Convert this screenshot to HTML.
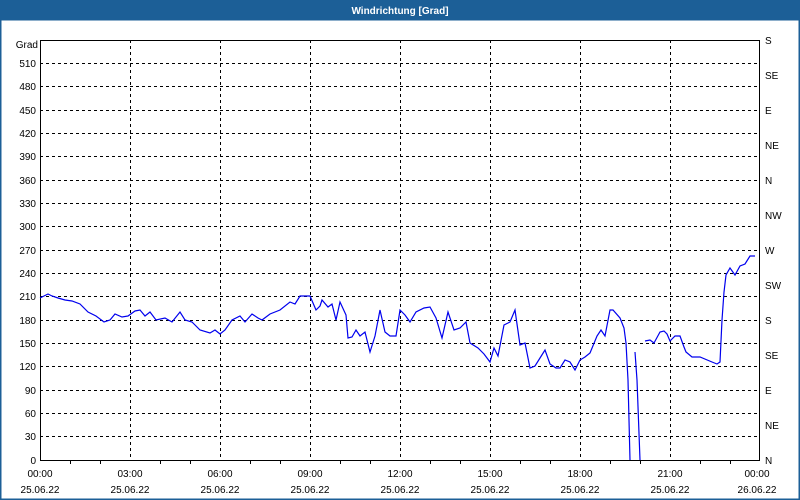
<!DOCTYPE html>
<html><head><meta charset="utf-8"><style>
html,body{margin:0;padding:0;width:800px;height:500px;overflow:hidden;background:#fff;font-family:"Liberation Sans",sans-serif}
</style></head><body>
<svg width="800" height="500" xmlns="http://www.w3.org/2000/svg" font-family="Liberation Sans, sans-serif" font-size="10">
<rect x="0" y="0" width="800" height="500" fill="#fff"/>
<rect x="0" y="0" width="800" height="20" fill="#1c5f97"/>
<rect x="0.5" y="19.5" width="799" height="480" fill="none" stroke="#1c5f97" stroke-width="2"/>
<text x="400" y="14" fill="#fff" font-weight="bold" text-anchor="middle">Windrichtung [Grad]</text>
<g stroke="#000" stroke-dasharray="3,3" stroke-width="1">
<line x1="40" y1="63.5" x2="760" y2="63.5"/><line x1="40" y1="86.5" x2="760" y2="86.5"/>
<line x1="40" y1="110.5" x2="760" y2="110.5"/><line x1="40" y1="133.5" x2="760" y2="133.5"/>
<line x1="40" y1="156.5" x2="760" y2="156.5"/><line x1="40" y1="180.5" x2="760" y2="180.5"/>
<line x1="40" y1="203.5" x2="760" y2="203.5"/><line x1="40" y1="226.5" x2="760" y2="226.5"/>
<line x1="40" y1="250.5" x2="760" y2="250.5"/><line x1="40" y1="273.5" x2="760" y2="273.5"/>
<line x1="40" y1="296.5" x2="760" y2="296.5"/><line x1="40" y1="320.5" x2="760" y2="320.5"/>
<line x1="40" y1="343.5" x2="760" y2="343.5"/><line x1="40" y1="366.5" x2="760" y2="366.5"/>
<line x1="40" y1="390.5" x2="760" y2="390.5"/><line x1="40" y1="413.5" x2="760" y2="413.5"/>
<line x1="40" y1="436.5" x2="760" y2="436.5"/>
<line x1="130.5" y1="40" x2="130.5" y2="460"/><line x1="220.5" y1="40" x2="220.5" y2="460"/>
<line x1="310.5" y1="40" x2="310.5" y2="460"/><line x1="400.5" y1="40" x2="400.5" y2="460"/>
<line x1="490.5" y1="40" x2="490.5" y2="460"/><line x1="580.5" y1="40" x2="580.5" y2="460"/>
<line x1="670.5" y1="40" x2="670.5" y2="460"/>
</g>
<rect x="40.5" y="40.5" width="719" height="420" fill="none" stroke="#000"/>
<g stroke="#000">
<line x1="70.5" y1="460" x2="70.5" y2="464"/><line x1="100.5" y1="460" x2="100.5" y2="464"/>
<line x1="160.5" y1="460" x2="160.5" y2="464"/><line x1="190.5" y1="460" x2="190.5" y2="464"/>
<line x1="250.5" y1="460" x2="250.5" y2="464"/><line x1="280.5" y1="460" x2="280.5" y2="464"/>
<line x1="340.5" y1="460" x2="340.5" y2="464"/><line x1="370.5" y1="460" x2="370.5" y2="464"/>
<line x1="430.5" y1="460" x2="430.5" y2="464"/><line x1="460.5" y1="460" x2="460.5" y2="464"/>
<line x1="520.5" y1="460" x2="520.5" y2="464"/><line x1="550.5" y1="460" x2="550.5" y2="464"/>
<line x1="610.5" y1="460" x2="610.5" y2="464"/><line x1="640.5" y1="460" x2="640.5" y2="464"/>
<line x1="700.5" y1="460" x2="700.5" y2="464"/><line x1="730.5" y1="460" x2="730.5" y2="464"/>
</g>
<g text-anchor="end" fill="#000">
<text x="38" y="48">Grad</text>
<text x="36" y="67">510</text><text x="36" y="90">480</text><text x="36" y="114">450</text>
<text x="36" y="137">420</text><text x="36" y="160">390</text><text x="36" y="184">360</text>
<text x="36" y="207">330</text><text x="36" y="230">300</text><text x="36" y="254">270</text>
<text x="36" y="277">240</text><text x="36" y="300">210</text><text x="36" y="324">180</text>
<text x="36" y="347">150</text><text x="36" y="370">120</text><text x="36" y="394">90</text>
<text x="36" y="417">60</text><text x="36" y="440">30</text><text x="36" y="464">0</text>
</g>
<g fill="#000">
<text x="765" y="44">S</text><text x="765" y="79">SE</text><text x="765" y="114">E</text>
<text x="765" y="149">NE</text><text x="765" y="184">N</text><text x="765" y="219">NW</text>
<text x="765" y="254">W</text><text x="765" y="289">SW</text><text x="765" y="324">S</text>
<text x="765" y="359">SE</text><text x="765" y="394">E</text><text x="765" y="429">NE</text>
<text x="765" y="464">N</text>
</g>
<g text-anchor="middle" fill="#000">
<text x="40" y="477">00:00</text><text x="40" y="493">25.06.22</text>
<text x="130" y="477">03:00</text><text x="130" y="493">25.06.22</text>
<text x="220" y="477">06:00</text><text x="220" y="493">25.06.22</text>
<text x="310" y="477">09:00</text><text x="310" y="493">25.06.22</text>
<text x="400" y="477">12:00</text><text x="400" y="493">25.06.22</text>
<text x="490" y="477">15:00</text><text x="490" y="493">25.06.22</text>
<text x="580" y="477">18:00</text><text x="580" y="493">25.06.22</text>
<text x="670" y="477">21:00</text><text x="670" y="493">25.06.22</text>
<text x="757" y="477">00:00</text><text x="757" y="493">26.06.22</text>
</g>
<g fill="none" stroke="#0000ee" stroke-width="1.2">
<polyline points="40,298 48,294 52,296 58,298 65,300 72,301 80,304 88,312 96,316 104,322 110,320 115,314 122,317 128,316 135,311 140,310 145,316 150,312 156,320 165,318 172,322 180,312 185,320 192,322 200,330 210,333 215,330 220,334 225,330 232,320 240,316 245,322 252,314 258,318 262,320 270,314 280,310 290,302 295,304 300,296 310,296 316,310 320,306 322,300 328,307 332,304 336,320 340,302 346,315 348,338 352,337 356,330 360,336 365,332 370,352 375,336 380,310 385,332 390,336 396,336 400,310 405,315 410,322 416,312 424,308 430,307 436,318 442,338 448,312 454,330 460,328 466,322 470,343 478,348 484,354 490,362 494,348 498,356 504,325 510,322 515,310 520,345 525,343 530,368 535,366 540,358 545,350 550,364 556,368 560,368 565,360 570,362 575,370 580,360 585,357 590,353 597,336 601,330 605,336 610,310 613,310 620,318 624,328 626,343 628,380 630,460"/>
<polyline points="635,352 637,380 640,460"/>
<polyline points="645,341 650,340 654,343 660,332 664,331 667,334 670,341 675,336 680,336 684,347 686,352 692,357 700,357 712,362 717,364 720,362 722,320 724,292 726,275 730,268 735,275 740,266 745,264 750,256 755,256"/>
</g>
</svg>
</body></html>
